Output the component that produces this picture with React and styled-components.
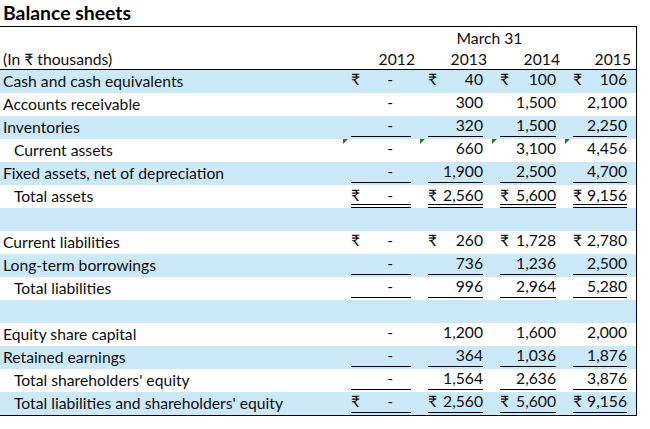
import React from 'react';
import styled, { createGlobalStyle } from 'styled-components';

const GlobalStyle = createGlobalStyle`
  html, body {
    margin: 0;
    padding: 0;
    background: #ffffff;
  }
  body {
    font-family: Lato, "Noto Sans", "DejaVu Sans", sans-serif;
    color: #000000;
  }
`;

const colors = {
  shade: '#cce9fa',
  line: '#000000',
  text: '#0d0d0d',
  flag: '#1f7a1f',
};

const COLUMNS = '343px 77px 72px 73px 71px';

const Page = styled.div`
  width: 637px;
`;

const Title = styled.div`
  height: 27px;
  border-bottom: 1px solid ${colors.line};
  display: flex;
  align-items: flex-end;
  padding: 0 0 4px 3px;
  box-sizing: border-box;
  font-size: 19.4px;
  font-weight: 700;
  line-height: 1;
  color: #000;
`;

const Table = styled.div`
  width: 637px;
  border-right: 1px solid ${colors.line};
  border-bottom: 1px solid ${colors.line};
  box-sizing: border-box;
  font-size: 15.7px;
  color: ${colors.text};
`;

const HeadRow = styled.div`
  display: grid;
  grid-template-columns: ${COLUMNS};
  height: ${p => (p.$ruled ? 22 : 21)}px;
  border-bottom: ${p => (p.$ruled ? `1px solid ${colors.line}` : 'none')};
  box-sizing: border-box;
  align-items: end;
  line-height: 1;
`;

const GroupHead = styled.div`
  grid-column: 2 / 6;
  text-align: center;
  padding-bottom: 1px;
`;

const HeadLabel = styled.div`
  padding: 0 0 1px 3px;
`;

const Year = styled.div`
  text-align: right;
  padding: 0 5px 1px 0;
`;

const Row = styled.div`
  display: grid;
  grid-template-columns: ${COLUMNS};
  height: 23px;
  background: ${p => (p.$shade ? colors.shade : 'transparent')};
  line-height: 1;
`;

const Label = styled.div`
  display: flex;
  align-items: center;
  padding-left: ${p => (p.$indent ? 14 : 3)}px;
  white-space: nowrap;
`;

const Cell = styled.div`
  position: relative;
  display: flex;
  padding: 0 9px ${p => (p.$line === 'double' ? 0 : 2)}px 8px;
`;

const Amount = styled.div`
  flex: 1;
  display: flex;
  align-items: center;
  justify-content: space-between;
  padding-top: ${p => (p.$line === 'double' ? 2 : 0)}px;
  border-bottom: ${p =>
    p.$line === 'single'
      ? `1px solid ${colors.line}`
      : p.$line === 'double'
      ? `4px double ${colors.line}`
      : '1px solid transparent'};
`;

const Figure = styled.span`
  margin-left: auto;
`;

const Dash = styled.span`
  margin-left: auto;
  margin-right: 18px;
`;

const Flag = styled.span`
  position: absolute;
  top: 0;
  left: 0;
  width: 0;
  height: 0;
  border-top: 5px solid ${colors.flag};
  border-right: 5px solid transparent;
`;

const rows = [
  { label: 'Cash and cash equivalents', shade: true, cur: true, vals: ['40', '100', '106'] },
  { label: 'Accounts receivable', vals: ['300', '1,500', '2,100'] },
  { label: 'Inventories', shade: true, line: 'single', vals: ['320', '1,500', '2,250'] },
  { label: 'Current assets', indent: true, flag: true, vals: ['660', '3,100', '4,456'] },
  { label: 'Fixed assets, net of depreciation', shade: true, line: 'single', vals: ['1,900', '2,500', '4,700'] },
  { label: 'Total assets', indent: true, cur: true, line: 'double', vals: ['2,560', '5,600', '9,156'] },
  { blank: true, shade: true },
  { label: 'Current liabilities', cur: true, vals: ['260', '1,728', '2,780'] },
  { label: 'Long-term borrowings', shade: true, line: 'single', vals: ['736', '1,236', '2,500'] },
  { label: 'Total liabilities', indent: true, line: 'single', vals: ['996', '2,964', '5,280'] },
  { blank: true, shade: true },
  { label: 'Equity share capital', vals: ['1,200', '1,600', '2,000'] },
  { label: 'Retained earnings', shade: true, line: 'single', vals: ['364', '1,036', '1,876'] },
  { label: "Total shareholders' equity", indent: true, line: 'single', vals: ['1,564', '2,636', '3,876'] },
  { label: "Total liabilities and shareholders' equity", shade: true, indent: true, cur: true, line: 'single', vals: ['2,560', '5,600', '9,156'] },
];

const ValueCell = ({ row, children }) => (
  <Cell $line={row.line}>
    {row.flag && <Flag />}
    <Amount $line={row.line}>
      {row.cur && <span>₹</span>}
      {children}
    </Amount>
  </Cell>
);

export default function App() {
  return (
    <>
      <GlobalStyle />
      <Page>
        <Title>Balance sheets</Title>
        <Table>
          <HeadRow>
            <GroupHead>March 31</GroupHead>
          </HeadRow>
          <HeadRow $ruled>
            <HeadLabel>(In ₹ thousands)</HeadLabel>
            <Year>2012</Year>
            <Year>2013</Year>
            <Year>2014</Year>
            <Year>2015</Year>
          </HeadRow>

          {rows.map((row, i) =>
            row.blank ? (
              <Row key={i} $shade={row.shade} />
            ) : (
              <Row key={i} $shade={row.shade}>
                <Label $indent={row.indent}>{row.label}</Label>
                <ValueCell row={row}>
                  <Dash>-</Dash>
                </ValueCell>
                {row.vals.map((v, j) => (
                  <ValueCell key={j} row={row}>
                    <Figure>{v}</Figure>
                  </ValueCell>
                ))}
              </Row>
            )
          )}
        </Table>
      </Page>
    </>
  );
}
